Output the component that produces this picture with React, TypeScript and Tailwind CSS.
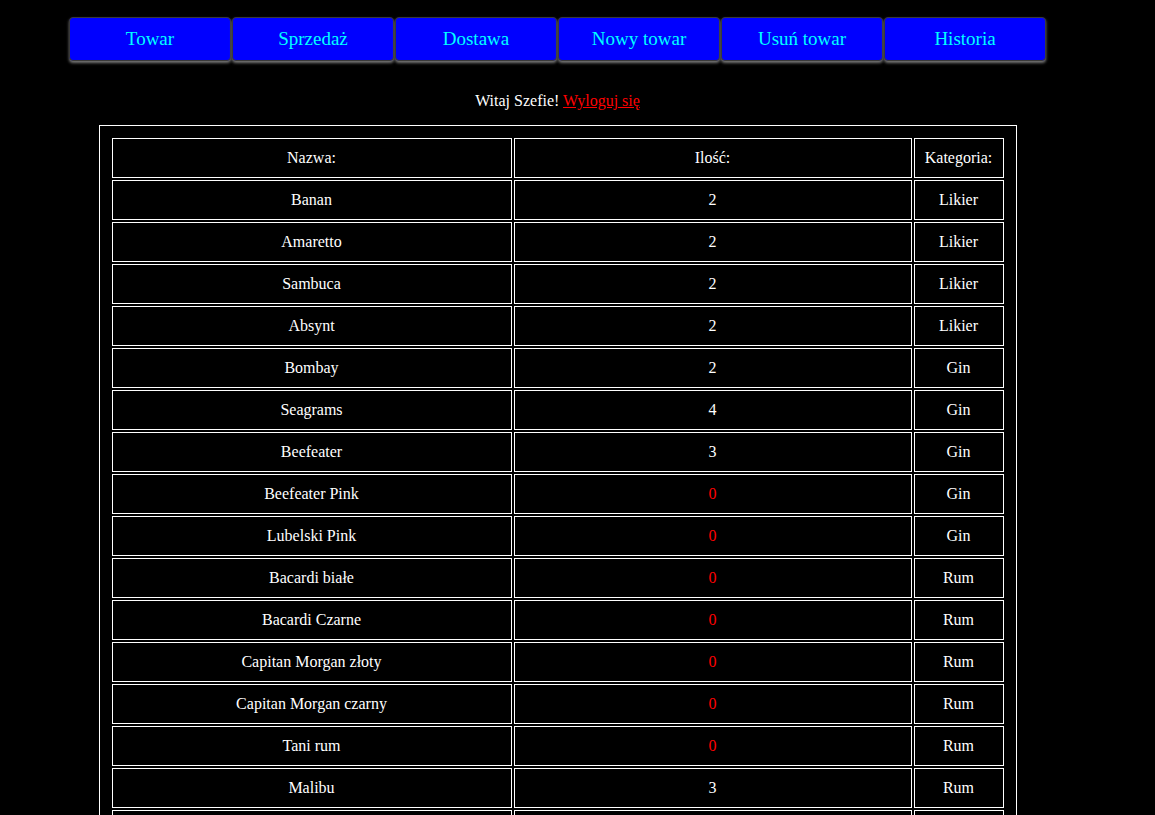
const tabs = ['Towar', 'Sprzedaż', 'Dostawa', 'Nowy towar', 'Usuń towar', 'Historia'];

const rows: [string, number, string][] = [
  ['Banan', 2, 'Likier'],
  ['Amaretto', 2, 'Likier'],
  ['Sambuca', 2, 'Likier'],
  ['Absynt', 2, 'Likier'],
  ['Bombay', 2, 'Gin'],
  ['Seagrams', 4, 'Gin'],
  ['Beefeater', 3, 'Gin'],
  ['Beefeater Pink', 0, 'Gin'],
  ['Lubelski Pink', 0, 'Gin'],
  ['Bacardi białe', 0, 'Rum'],
  ['Bacardi Czarne', 0, 'Rum'],
  ['Capitan Morgan złoty', 0, 'Rum'],
  ['Capitan Morgan czarny', 0, 'Rum'],
  ['Tani rum', 0, 'Rum'],
  ['Malibu', 3, 'Rum'],
  ['Havana Club', 2, 'Rum'],
  ['Jack Daniels', 1, 'Whisky'],
];

export default function App() {
  return (
    <div
      className="min-h-screen bg-black text-white text-base"
      style={{ fontFamily: "'Liberation Serif', 'Times New Roman', serif" }}
    >
      <div className="w-[1115px] flex flex-col items-center pt-[17px]">
        {/* Nav */}
        <div className="flex gap-[1px]">
          {tabs.map((t) => (
            <div
              key={t}
              className="w-[162px] h-[44px] flex items-center justify-center bg-[#0000ff] text-[#00ffff] text-[19px] rounded-[4px] border border-[#3a3a3a] shadow-[0_2px_3px_#777]"
            >
              {t}
            </div>
          ))}
        </div>

        {/* Greeting */}
        <p className="mt-[31px] leading-[18px]">
          Witaj Szefie!{' '}
          <a href="#" className="text-[#ff0000] underline">Wyloguj się</a>
        </p>

        {/* Stock table */}
        <table className="mt-[15px] border border-white border-separate border-spacing-[2px] p-[10px]">
          <thead>
            <tr>
              <th className="w-[400px] h-[40px] border border-white font-normal text-center">Nazwa:</th>
              <th className="w-[398px] h-[40px] border border-white font-normal text-center">Ilość:</th>
              <th className="w-[90px] h-[40px] border border-white font-normal text-center">Kategoria:</th>
            </tr>
          </thead>
          <tbody>
            {rows.map(([name, qty, cat]) => (
              <tr key={name}>
                <td className="h-[40px] border border-white text-center">{name}</td>
                <td className={`h-[40px] border border-white text-center ${qty === 0 ? 'text-[#ff0000]' : ''}`}>{qty}</td>
                <td className="h-[40px] border border-white text-center">{cat}</td>
              </tr>
            ))}
          </tbody>
        </table>
      </div>
    </div>
  );
}
